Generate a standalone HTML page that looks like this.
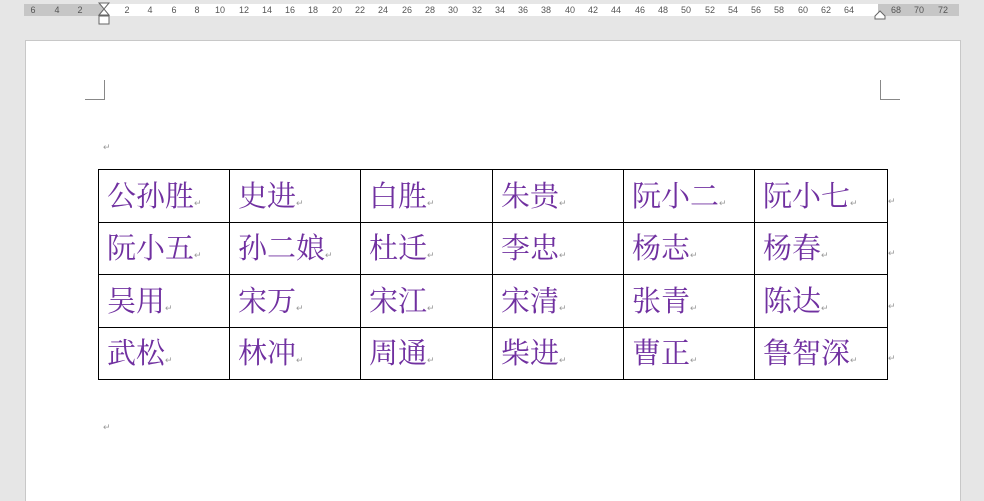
<!DOCTYPE html>
<html><head><meta charset="utf-8"><style>
body{margin:0;width:984px;height:492px;background:#e6e6e6;position:relative;overflow:hidden;font-family:"Liberation Sans",sans-serif}
.ab{position:absolute}
.rn{position:absolute;top:5px;font-size:9px;color:#555;transform:translateX(-50%)}
.page{position:absolute;left:25px;top:40px;width:934px;height:460px;background:#fff;border:1px solid #c8c8c8;border-bottom:none}
table{position:absolute;left:98px;top:169px;border-collapse:collapse;table-layout:fixed;width:789px}
td{border:1px solid #000;height:52.5px;padding:3px 0 0 8px;box-sizing:border-box;font-family:"Liberation Serif","Noto Serif CJK SC",serif;font-size:29px;color:#7030a0;vertical-align:middle;line-height:1;white-space:nowrap}
.m{font-size:9px;color:#999;font-family:"Liberation Sans",sans-serif}
</style></head><body>
<div class="ab" style="left:24px;top:4px;width:935px;height:12px;background:#c6c6c6"></div>
<div class="ab" style="left:103px;top:4px;width:775px;height:12px;background:#fff"></div>
<svg class="ab" style="left:97px;top:2px" width="14" height="24"><path d="M2 1h10l-5 6z M7 7l-5 6h10z" fill="#fff" stroke="#666"/><rect x="2" y="14" width="10" height="8" fill="#fff" stroke="#666"/></svg>
<svg class="ab" style="left:873px;top:9px" width="14" height="12"><path d="M2 10V7l5-5 5 5v3z" fill="#fff" stroke="#666"/></svg>
<div class="page"></div>
<div class="ab" style="left:104px;top:80px;width:1px;height:20px;background:#888"></div>
<div class="ab" style="left:85px;top:99px;width:20px;height:1px;background:#888"></div>
<div class="ab" style="left:880px;top:80px;width:1px;height:20px;background:#888"></div>
<div class="ab" style="left:880px;top:99px;width:20px;height:1px;background:#888"></div>
<div class="ab m" style="left:103px;top:142px">↵</div>
<div class="ab m" style="left:103px;top:422px">↵</div>
<table>
<colgroup><col style="width:131px"><col style="width:131px"><col style="width:132px"><col style="width:131px"><col style="width:131px"><col style="width:133px"></colgroup>
<tr><td>公孙胜<span class="m">↵</span></td><td>史进<span class="m">↵</span></td><td>白胜<span class="m">↵</span></td><td>朱贵<span class="m">↵</span></td><td>阮小二<span class="m">↵</span></td><td>阮小七<span class="m">↵</span></td></tr>
<tr><td>阮小五<span class="m">↵</span></td><td>孙二娘<span class="m">↵</span></td><td>杜迁<span class="m">↵</span></td><td>李忠<span class="m">↵</span></td><td>杨志<span class="m">↵</span></td><td>杨春<span class="m">↵</span></td></tr>
<tr><td>吴用<span class="m">↵</span></td><td>宋万<span class="m">↵</span></td><td>宋江<span class="m">↵</span></td><td>宋清<span class="m">↵</span></td><td>张青<span class="m">↵</span></td><td>陈达<span class="m">↵</span></td></tr>
<tr><td>武松<span class="m">↵</span></td><td>林冲<span class="m">↵</span></td><td>周通<span class="m">↵</span></td><td>柴进<span class="m">↵</span></td><td>曹正<span class="m">↵</span></td><td>鲁智深<span class="m">↵</span></td></tr>
</table>
<div class="ab m" style="left:888px;top:196px">↵</div>
<div class="ab m" style="left:888px;top:248px">↵</div>
<div class="ab m" style="left:888px;top:301px">↵</div>
<div class="ab m" style="left:888px;top:353px">↵</div>
<div class="rn" style="left:33px">6</div><div class="rn" style="left:57px">4</div><div class="rn" style="left:80px">2</div>
<div class="rn" style="left:127px">2</div><div class="rn" style="left:150px">4</div><div class="rn" style="left:174px">6</div><div class="rn" style="left:197px">8</div>
<div class="rn" style="left:220px">10</div><div class="rn" style="left:244px">12</div><div class="rn" style="left:267px">14</div><div class="rn" style="left:290px">16</div><div class="rn" style="left:313px">18</div><div class="rn" style="left:337px">20</div><div class="rn" style="left:360px">22</div><div class="rn" style="left:383px">24</div><div class="rn" style="left:407px">26</div><div class="rn" style="left:430px">28</div><div class="rn" style="left:453px">30</div><div class="rn" style="left:477px">32</div><div class="rn" style="left:500px">34</div><div class="rn" style="left:523px">36</div><div class="rn" style="left:546px">38</div><div class="rn" style="left:570px">40</div><div class="rn" style="left:593px">42</div><div class="rn" style="left:616px">44</div><div class="rn" style="left:640px">46</div><div class="rn" style="left:663px">48</div><div class="rn" style="left:686px">50</div><div class="rn" style="left:710px">52</div><div class="rn" style="left:733px">54</div><div class="rn" style="left:756px">56</div><div class="rn" style="left:779px">58</div><div class="rn" style="left:803px">60</div><div class="rn" style="left:826px">62</div><div class="rn" style="left:849px">64</div>
<div class="rn" style="left:896px">68</div><div class="rn" style="left:919px">70</div><div class="rn" style="left:943px">72</div>
</body></html>
